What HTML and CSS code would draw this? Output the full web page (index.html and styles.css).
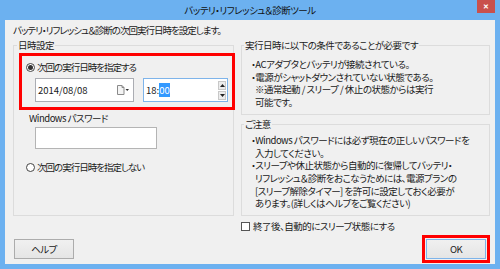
FILE: index.html
```html
<!DOCTYPE html>
<html lang="ja">
<head>
    <meta charset="UTF-8">
    <title>バッテリ・リフレッシュ＆診断ツール</title>
    <link rel="stylesheet" href="styles.css">
</head>
<body>
    <div class="window">
        <div class="titlebar">
            <span class="title">バッテリ・リフレッシュ＆診断ツール</span>
            <span class="close">✕</span>
        </div>
        <div class="client">
            <p class="intro">バッテリ・リフレッシュ＆診断の次回実行日時を設定します。</p>
            <div class="panes">
                <fieldset class="group schedule">
                    <legend>日時設定</legend>
                    <div class="highlight">
                        <label class="radio"><span class="radio-mark checked"></span>次回の実行日時を指定する</label>
                        <div class="datetime">
                            <div class="datebox">
                                <span>2014/08/08</span>
                                <svg class="cal" width="13" height="10" viewBox="0 0 13 10">
                                    <path d="M1.5 0.5h4.5l2 2v7h-6.5z" fill="#f4f4f4" stroke="#8a8a8a"/>
                                    <path d="M6 0.5v2h2" fill="none" stroke="#8a8a8a"/>
                                    <path d="M9.5 4h3.5l-1.75 2z" fill="#333"/>
                                </svg>
                            </div>
                            <div class="timebox">
                                <span>18:<mark>00</mark></span>
                                <div class="spin">
                                    <span class="spin-btn"><svg width="5" height="3" viewBox="0 0 5 3"><path d="M0 3h5l-2.5-3z" fill="#222"/></svg></span>
                                    <span class="spin-btn"><svg width="5" height="3" viewBox="0 0 5 3"><path d="M0 0h5l-2.5 3z" fill="#222"/></svg></span>
                                </div>
                            </div>
                        </div>
                    </div>
                    <div class="caption">Windows パスワード</div>
                    <div class="textbox"></div>
                    <label class="radio second"><span class="radio-mark"></span>次回の実行日時を指定しない</label>
                </fieldset>
                <div class="notes">
                    <fieldset class="group terms">
                        <legend>実行日時に以下の条件であることが必要です</legend>
                        <ul>
                            <li>・ACアダプタとバッテリが接続されている。</li>
                            <li>・電源がシャットダウンされていない状態である。<br>※通常起動 / スリープ / 休止の状態からは実行<br>可能です。</li>
                        </ul>
                    </fieldset>
                    <fieldset class="group caution">
                        <legend>ご注意</legend>
                        <ul>
                            <li>・Windows パスワードには必ず現在の正しいパスワードを<br>入力してください。</li>
                            <li>・スリープや休止状態から自動的に復帰してバッテリ・<br>リフレッシュ＆診断をおこなうためには、電源プランの<br>[スリープ解除タイマー] を許可に設定しておく必要が<br>あります。(詳しくはヘルプをご覧ください)</li>
                        </ul>
                    </fieldset>
                </div>
            </div>
            <div class="footer">
                <div class="footer-left">
                    <button type="button" class="btn">ヘルプ</button>
                </div>
                <div class="footer-right">
                    <label class="check"><span class="check-mark"></span>終了後、自動的にスリープ状態にする</label>
                    <div class="callout">
                        <button type="button" class="btn default">OK</button>
                    </div>
                </div>
            </div>
        </div>
    </div>
</body>
</html>
```

FILE: styles.css
```css
* {
    box-sizing: border-box;
}
body {
    margin: 0;
    font-family: "Noto Sans CJK JP", "Noto Sans", sans-serif;
    font-size: 9.5px;
    font-feature-settings: "palt";
    letter-spacing: -0.5px;
    color: #1a1a1a;
    background-color: #6cb1f0;
}
.window {
    width: 500px;
    height: 269px;
    padding: 0 5px 5px;
    background-color: #6cb1f0;
    display: flex;
    flex-direction: column;
}
.titlebar {
    height: 20px;
    display: grid;
    grid-template-columns: 1fr auto 1fr;
}
.title {
    grid-column: 2;
    line-height: 21px;
    color: #111;
}
.close {
    grid-column: 3;
    justify-self: end;
    width: 18px;
    height: 13px;
    background-color: #c9504c;
    color: #fff;
    font-size: 7px;
    font-weight: bold;
    line-height: 13px;
    text-align: center;
    letter-spacing: 0;
}
.client {
    flex: 1;
    background-color: #f0f0f0;
    padding: 4px 5px 1px 8px;
    display: flex;
    flex-direction: column;
}
.intro {
    margin: 0;
    line-height: 13px;
    letter-spacing: -1px;
}
.panes {
    display: flex;
    gap: 7px;
    margin-top: 2px;
}
.group {
    margin: 0;
    min-width: 0;
    border: 1px solid #dcdcdc;
}
.group legend {
    padding: 0 1px;
    line-height: 13px;
}
.schedule {
    width: 221px;
    padding: 1px 0 41px 5px;
}
.schedule legend {
    margin-left: -2px;
}
.highlight {
    margin-right: -2px;
    border: 3px solid #f00;
    padding: 5px 4px 5px 4px;
}
.radio {
    display: flex;
    align-items: center;
    line-height: 13px;
    letter-spacing: -1px;
}
.radio-mark {
    width: 9px;
    height: 9px;
    border: 1px solid #444;
    border-radius: 50%;
    background-color: #fff;
    margin-right: 2px;
    display: flex;
    align-items: center;
    justify-content: center;
}
.radio-mark.checked::after {
    content: "";
    width: 5px;
    height: 5px;
    border-radius: 50%;
    background-color: #333;
}
.datetime {
    display: flex;
    gap: 9px;
    margin-top: 4px;
    padding-left: 9px;
    letter-spacing: 0;
}
.datebox, .timebox {
    height: 24px;
    background-color: #fff;
    display: flex;
    align-items: center;
    padding-left: 2px;
}
.datebox {
    width: 99px;
    border: 1px solid #abadb3;
    justify-content: space-between;
    padding-right: 4px;
}
.timebox {
    width: 85px;
    border: 1px solid #7eb4ea;
    justify-content: space-between;
    padding-right: 1px;
}
.timebox mark {
    background-color: #3399ff;
    color: #fff;
}
.spin {
    display: flex;
    flex-direction: column;
    gap: 1px;
}
.spin-btn {
    width: 8px;
    height: 9px;
    border: 1px solid #c8c8c8;
    background-color: #ececec;
    display: flex;
    align-items: center;
    justify-content: center;
}
.caption {
    margin: 2px 0 0 10px;
    line-height: 13px;
}
.textbox {
    width: 122px;
    height: 22px;
    margin: 2px 0 0 16px;
    border: 1px solid #b4b4b4;
    background-color: #fff;
}
.radio.second {
    margin: 12px 0 0 7px;
}
.notes {
    width: 249px;
    display: flex;
    flex-direction: column;
}
.notes .group {
    padding: 6px 0 5px 9px;
}
.notes legend {
    margin-left: -7px;
}
.caution.group {
    flex: 1;
    margin-top: 3px;
    padding-top: 3px;
}
.notes ul {
    margin: 0;
    padding: 0;
    list-style: none;
}
.notes li {
    line-height: 12.7px;
    white-space: nowrap;
    padding-left: 4px;
    text-indent: -4px;
}
.footer {
    display: flex;
    gap: 7px;
    margin-top: 4px;
}
.footer-left {
    width: 221px;
    display: flex;
    align-items: flex-end;
}
.footer-right {
    width: 249px;
    display: flex;
    flex-direction: column;
}
.check {
    display: flex;
    align-items: center;
    line-height: 13px;
}
.check-mark {
    width: 9px;
    height: 9px;
    border: 1px solid #555;
    background-color: #fff;
    margin-right: 3px;
}
.callout {
    align-self: flex-end;
    margin-top: 2px;
    border: 3px solid #f00;
    padding: 1px;
}
.btn {
    width: 60px;
    height: 20px;
    padding: 0;
    font: inherit;
    letter-spacing: inherit;
    color: #1a1a1a;
    border: 1px solid #acacac;
    background: linear-gradient(#f0f0f0, #e5e5e5);
}
.footer-left .btn {
    margin: 0 0 4px 1px;
}
.btn.default {
    border-color: #7eb4ea;
}
```
